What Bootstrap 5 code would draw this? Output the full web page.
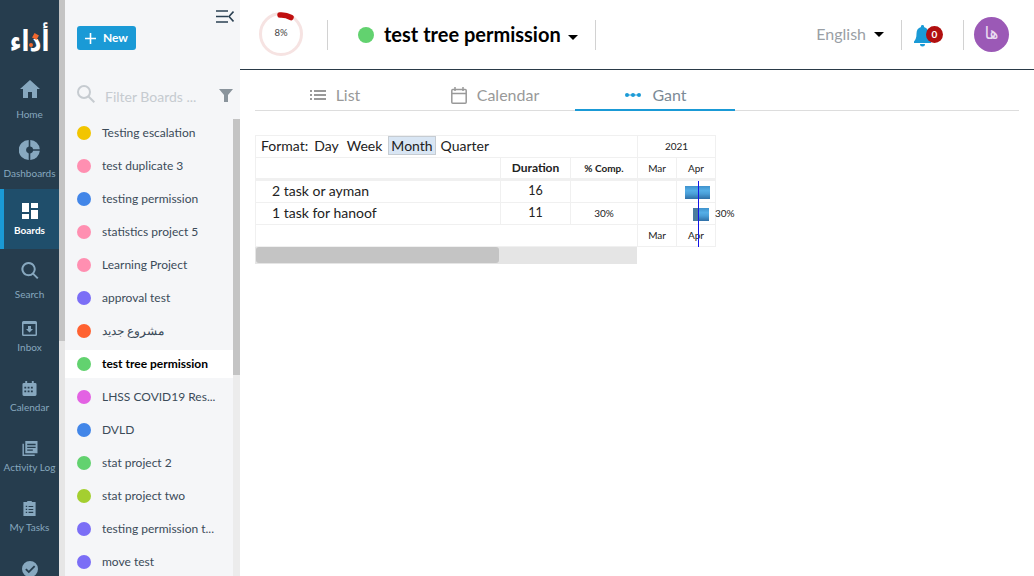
<!DOCTYPE html>
<html lang="en"><head><meta charset="utf-8"><title>Gantt</title>
<link href="https://cdn.jsdelivr.net/npm/bootstrap@5.3.0/dist/css/bootstrap.min.css" rel="stylesheet">
<style>
html,body{height:576px;overflow:hidden}
body{font-family:Lato,"Noto Sans",sans-serif;background:#fff;color:#253c4e}
.shell{height:576px;overflow:hidden}
.rail{width:59px;background:#263d4e;flex:none;height:576px;overflow:hidden}
.logo-box{height:69px;position:relative;color:#fff;flex:none}
.logo-text{position:absolute;left:0;width:59px;top:27px;text-align:center;font:700 29px/1 "DejaVu Sans",sans-serif;transform:scaleX(.8)}
.logo-spark{position:absolute;left:33px;top:34px;width:5px;height:5px;background:#f0682e;transform:rotate(30deg)}
.logo-spark2{position:absolute;left:29px;top:43px;width:4px;height:4px;border-radius:50%;background:#f0682e}
.rail-item{height:60px;color:#87a8bf;font-size:10px;line-height:13px;position:relative;white-space:nowrap;flex:none}
.rail-item svg{display:block;fill:#87a8bf;flex:none}
.rail-item.on{background:#1f4e6b;color:#fff;font-weight:700;border-left:4px solid #1a9ad6;padding-right:4px}
.rail-item.on svg{fill:#fff}
.ri-home{padding-top:11px;gap:10px}
.ri-dash{padding-top:11px;gap:7px}
.ri-board{padding-top:14px;gap:5px}
.ri-search{padding-top:13px;gap:9px}
.ri-std{padding-top:12px;gap:5px}
.strip{width:6px;flex:none;background:#e6e6e6}
.strip-thumb{height:341px;background:#c4c4c4}
.panel{width:175px;flex:none;background:#f5f6f8;height:576px;position:relative}
.collapse-ico{position:absolute;left:151px;top:10px}
.new-btn{position:absolute;left:12px;top:26px;width:59px;height:24px;background:#1a9ad6;color:#fff;font-size:12px;font-weight:700;border:0;border-radius:3px;padding:0;gap:7px}
.filter-row{height:119px;padding:85px 0 0 12px}
.filter-text{font-size:14px;color:#c6cbd0;margin-left:10px;line-height:24px;white-space:nowrap}
.filter-ico{margin:4px 7px 0 auto}
.board{height:28px;margin-bottom:5px;padding-left:12px;font-size:12px;gap:11px;color:#3b4b58;width:168px;white-space:nowrap}
.board.on{background:#fff;color:#000;font-weight:700}
.dot{width:14px;height:14px;border-radius:50%;flex:none}
.dot-lg{width:16px;height:16px;margin:0 10px 0 30px}
.panel-bar{position:absolute;left:168px;top:119px;width:7px;height:457px;background:#ececec}
.panel-thumb{height:256px;background:#c4c4c4}
.work{flex:1;min-width:0}
.topbar{height:70px;border-bottom:1px solid #2a3a48;position:relative;padding-left:19px}
.ring{width:44px;height:44px;position:relative;flex:none;margin-bottom:2px}
.ring svg{overflow:visible}
.ring span{position:absolute;inset:0;display:flex;align-items:center;justify-content:center;font-size:9.5px;color:#444}
.vsep{width:1px;height:30px;background:#d2d2d2;flex:none}
.vs1{margin-left:24px}.vs2{margin-left:17px}.vs3{margin-left:17px}.vs4{margin-left:15px}
.ptitle{font-size:20px;font-weight:700;color:#000;line-height:30px;white-space:nowrap;margin-bottom:2px}
.caret-d{width:0;height:0;border-left:5px solid transparent;border-right:5px solid transparent;border-top:5px solid #000;flex:none}
.caret-t{margin:6px 0 0 7px}
.caret-l{margin-left:8px}
.lang{font-size:16px;color:#9a9fa5;margin-bottom:2px}
.bell-wrap{width:34px;height:24px;position:relative;margin-left:12px}
.nbadge{position:absolute;left:12px;top:3px;width:17px;height:17px;border-radius:50%;background:#b10f0f;color:#fff;font-size:10px;font-weight:700;line-height:17px;text-align:center}
.avatar{width:35px;height:35px;border-radius:50%;background:#9b59b6;color:#e9dcf0;font:400 17px/33px "DejaVu Sans",sans-serif;text-align:center;margin:0 25px 0 10px}
.tabs-row{margin:11px 15px 0;height:30px;border-bottom:1px solid #ddd}
.tabbtn{width:160px;height:30px;color:#999;font-size:16px;gap:10px;line-height:20px;padding-bottom:2px}
.tabbtn.on{color:#7b8a96;border-bottom:2px solid #1a9ad6;padding:0 0 0 1px}
.gantt{margin:24px 0 0 15px;width:500px;position:relative;font-size:14px;color:#222}
.ggrid{display:grid;grid-template-columns:245px 70px 67px 39px 39px;width:461px;border-left:1px solid #f0f0f0}
.ggrid>div{height:22px;border-top:1px solid #f0f0f0;border-right:1px solid #f0f0f0;display:flex;align-items:center;justify-content:center;font-size:10px}
.ggrid>.thick{height:23px;border-bottom:2px solid #f0f0f0}
.ggrid>.nm{justify-content:flex-start;padding:0 0 2px 16px;font-size:14px}
.ggrid>.fmt{grid-column:1/4;justify-content:flex-start;padding:0 0 2px 5px;font-size:14px}
.ggrid>.yr{grid-column:4/6}
.ggrid>.blank{grid-column:1/4;height:23px;border-bottom:1px solid #f0f0f0}
.ggrid>.low{height:23px;border-bottom:1px solid #f0f0f0}
.fmt span{margin-right:4px;padding:0 2px;white-space:nowrap}
.fmt .lbl{margin-right:4px;padding:0}
.fmt .sel{background:#d9e6f4;border:1px solid #c6ccd2;margin:0 3px 0 0;padding:0 2px;line-height:17px}
.ggrid>.dur{font-size:12.5px}
.ggrid>.hd{font-weight:700;font-size:12px;color:#222}
.ggrid>.hd2{font-size:10px}
.gscroll{width:382px;height:17px;background:#e5e5e5;padding-left:1px}
.gthumb{width:243px;height:16px;background:#c4c4c4;border-radius:3px}
.today{position:absolute;left:443px;top:46px;width:1px;height:66px;background:#1414e6}
.gbar{position:absolute;height:13px;background:linear-gradient(#3f92cd,#55aee6 35%,#4a9fd8 60%,#2f6fa6)}
.gbar i{display:block;height:100%;width:5px;background:#4a7c9e}
.gb1{left:430px;top:51px;width:25px}
.gb2{left:438px;top:73px;width:16px}
.gpct{position:absolute;left:460px;top:71px;font-size:10px}
</style></head><body>
<div class="d-flex shell">
 <nav class="rail d-flex flex-column">
  <div class="logo-box"><span class="logo-text">أداء</span><i class="logo-spark"></i><i class="logo-spark2"></i></div>
  <div class="rail-item ri-home d-flex flex-column align-items-center"><svg width="20" height="18" viewBox="0 0 20 18"><path d="M10 0 0 9h3v9h5v-6h4v6h5V9h3z"/></svg>Home</div>
  <div class="rail-item ri-dash d-flex flex-column align-items-center"><svg width="21" height="20" viewBox="0 0 21 20"><path d="M9.700 0v6.600a3.500 3.500 0 0 0 0 6.800V20a10 10 0 0 1 0-20zM11.300 0A10 10 0 0 1 20.800 9.300h-6.600a3.500 3.500 0 0 0-2.900-2.700zM20.800 10.700A10 10 0 0 1 11.300 20v-6.600a3.500 3.500 0 0 0 2.900-2.700z"/></svg>Dashboards</div>
  <div class="rail-item ri-board on d-flex flex-column align-items-center"><svg width="16" height="16" viewBox="0 0 16 16"><path d="M0 0h7v9H0zM9 0h7v5H9zM9 7h7v9H9zM0 11h7v5H0z"/></svg>Boards</div>
  <div class="rail-item ri-search d-flex flex-column align-items-center"><svg width="18" height="17" viewBox="0 0 18 18"><path d="M7.500 0a7.500 7.500 0 0 1 5.900 12.100l4.600 4.500-1.500 1.400-4.500-4.600A7.500 7.500 0 1 1 7.500 0zm0 2a5.500 5.500 0 1 0 0 11 5.500 5.500 0 0 0 0-11z"/></svg>Search</div>
  <div class="rail-item ri-std d-flex flex-column align-items-center"><svg width="15" height="15" viewBox="0 0 15 15"><path fill-rule="evenodd" d="M1.500 0h12A1.500 1.500 0 0 1 15 1.500v12a1.500 1.500 0 0 1-1.500 1.500h-12A1.500 1.500 0 0 1 0 13.500v-12A1.500 1.500 0 0 1 1.500 0zM1.500 3v10.500h12V3zM6 5h3v3h2l-3.500 3.500L4 8h2z"/></svg>Inbox</div>
  <div class="rail-item ri-std d-flex flex-column align-items-center"><svg width="15" height="15" viewBox="0 0 15 16"><path fill-rule="evenodd" d="M3 0h2v2h5V0h2v2h1.500A1.500 1.500 0 0 1 15 3.500v11a1.500 1.500 0 0 1-1.500 1.500h-12A1.500 1.500 0 0 1 0 14.500v-11A1.500 1.500 0 0 1 1.500 2H3zM2 6v2h2V6zm3.500 0v2h2V6zM9 6v2h2V6zM2 10v2h2v-2zm3.500 0v2h2v-2zM9 10v2h2v-2z"/></svg>Calendar</div>
  <div class="rail-item ri-std d-flex flex-column align-items-center"><svg width="16" height="15" viewBox="0 0 16 16"><path fill-rule="evenodd" d="M3 0h13v13H3zM5 3v1.500h9V3zm0 3v1.500h9V6zm0 3v1.500h6V9zM0 3h1.500v11.500H13V16H0z"/></svg>Activity Log</div>
  <div class="rail-item ri-std d-flex flex-column align-items-center"><svg width="13" height="15" viewBox="0 0 13 16"><path fill-rule="evenodd" d="M4 1a2.500 2.500 0 0 1 5 0h4v15H0V1zM2.500 5v1.500H4V5zm3 .2v1.200h5V5.200zm-3 3V9.700H4V8.200zm3 .2v1.200h5V8.400zm-3 3v1.500H4v-1.500zm3 .2v1.200h5v-1.200z"/></svg>My Tasks</div>
  <div class="rail-item ri-std d-flex flex-column align-items-center"><svg width="16" height="16" viewBox="0 0 16 16"><path fill-rule="evenodd" d="M8 0a8 8 0 1 1 0 16A8 8 0 0 1 8 0zm4 4.500L6.800 9.700 4.500 7.500 3.200 8.800l3.600 3.500 6.500-6.500z"/></svg></div>
 </nav>
 <div class="strip"><div class="strip-thumb"></div></div>
 <aside class="panel">
  <svg class="collapse-ico" width="18" height="13" viewBox="0 0 18 13" fill="none" stroke="#2b4153" stroke-width="1.600"><path d="M0 1h12M0 6.500h12M0 12h12M17.500 1.500 13 6.500l4.500 5"/></svg>
  <button class="new-btn d-flex align-items-center justify-content-center"><svg width="11" height="11" viewBox="0 0 11 11"><path d="M4.700 0h1.600v4.700H11v1.600H6.300V11H4.700V6.300H0V4.700h4.700z" fill="#fff"/></svg>New</button>
  <div class="filter-row d-flex align-items-start">
   <svg width="18" height="18" viewBox="0 0 18 18" fill="none" stroke="#c6cbd0" stroke-width="2"><circle cx="7" cy="7" r="6"/><path d="m11.500 11.500 5.800 5.800"/></svg>
   <span class="filter-text">Filter Boards ...</span>
   <svg class="filter-ico" width="14" height="13" viewBox="0 0 14 13"><path d="M0 0h14L9 6v7H5V6z" fill="#8a949c"/></svg>
  </div>
  <div class="board d-flex align-items-center"><i class="dot" style="background:#f2c500"></i>Testing escalation</div>
  <div class="board d-flex align-items-center"><i class="dot" style="background:#ff8fb1"></i>test duplicate 3</div>
  <div class="board d-flex align-items-center"><i class="dot" style="background:#4286e8"></i>testing permission</div>
  <div class="board d-flex align-items-center"><i class="dot" style="background:#ff8fb1"></i>statistics project 5</div>
  <div class="board d-flex align-items-center"><i class="dot" style="background:#ff8fb1"></i>Learning Project</div>
  <div class="board d-flex align-items-center"><i class="dot" style="background:#7b6ef6"></i>approval test</div>
  <div class="board d-flex align-items-center"><i class="dot" style="background:#ff6231"></i>مشروع جديد</div>
  <div class="board on d-flex align-items-center"><i class="dot" style="background:#62d26f"></i>test tree permission</div>
  <div class="board d-flex align-items-center"><i class="dot" style="background:#e362e3"></i>LHSS COVID19 Res...</div>
  <div class="board d-flex align-items-center"><i class="dot" style="background:#4286e8"></i>DVLD</div>
  <div class="board d-flex align-items-center"><i class="dot" style="background:#62d26f"></i>stat project 2</div>
  <div class="board d-flex align-items-center"><i class="dot" style="background:#a4cf30"></i>stat project two</div>
  <div class="board d-flex align-items-center"><i class="dot" style="background:#7b6ef6"></i>testing permission t...</div>
  <div class="board d-flex align-items-center"><i class="dot" style="background:#7b6ef6"></i>move test</div>
  <div class="panel-bar"><div class="panel-thumb"></div></div>
 </aside>
 <main class="work">
  <header class="topbar d-flex align-items-center">
   <div class="ring"><svg width="44" height="44" viewBox="0 0 44 44" fill="none"><circle cx="22" cy="22" r="20.500" stroke="#f6e3e2" stroke-width="3"/><path d="M21 3A20 20 0 0 1 32 5.500" stroke="#c00f0f" stroke-width="5.500" stroke-linecap="round"/></svg><span>8%</span></div>
   <div class="vsep vs1"></div>
   <i class="dot dot-lg" style="background:#62d26f"></i>
   <span class="ptitle">test tree permission</span>
   <i class="caret-d caret-t"></i>
   <div class="vsep vs2"></div>
   <span class="lang ms-auto">English</span>
   <i class="caret-d caret-l"></i>
   <div class="vsep vs3"></div>
   <div class="bell-wrap"><svg width="17" height="22" viewBox="0 0 17 22"><path d="M8.500 0a1.500 1.500 0 0 1 1.500 2c3 .8 4.500 3.300 4.500 6.500 0 4 .8 6 2.500 8v1.500H0v-1.500c1.700-2 2.500-4 2.500-8C2.500 5.300 4 2.800 7 2a1.500 1.500 0 0 1 1.500-2zM6 19h5a2.500 2.500 0 0 1-5 0z" fill="#1a9ad6"/></svg><span class="nbadge">0</span></div>
   <div class="vsep vs4"></div>
   <div class="avatar">ها</div>
  </header>
  <div class="tabs-row d-flex">
   <div class="tabbtn d-flex align-items-center justify-content-center"><svg width="16" height="10" viewBox="0 0 16 10" fill="#999"><path d="M0 0h2v2H0zM4 0h12v2H4zM0 4h2v2H0zM4 4h12v2H4zM0 8h2v2H0zM4 8h12v2H4z"/></svg>List</div>
   <div class="tabbtn d-flex align-items-center justify-content-center"><svg width="16" height="17" viewBox="0 0 16 17" fill="none" stroke="#999" stroke-width="1.500"><rect x=".8" y="2.500" width="14.400" height="13.700" rx="1"/><path d="M4 0v4M12 0v4M1 6.500h14"/></svg>Calendar</div>
   <div class="tabbtn on d-flex align-items-center justify-content-center"><svg width="18" height="6" viewBox="0 0 18 6" fill="#1a9ad6"><circle cx="3" cy="3" r="2"/><circle cx="9" cy="3" r="2"/><circle cx="15" cy="3" r="2"/><path d="M3 2.500h12v1H3z"/></svg>Gant</div>
  </div>
  <section class="gantt">
   <div class="ggrid">
    <div class="fmt"><span class="lbl">Format:</span><span>Day</span><span>Week</span><span class="sel">Month</span><span>Quarter</span></div><div class="yr">2021</div>
    <div class="thick"></div><div class="thick hd">Duration</div><div class="thick hd hd2">% Comp.</div><div class="thick">Mar</div><div class="thick">Apr</div>
    <div class="nm">2 task or ayman</div><div class="dur">16</div><div></div><div></div><div></div>
    <div class="nm">1 task for hanoof</div><div class="dur">11</div><div>30%</div><div></div><div></div>
    <div class="blank"></div><div class="low">Mar</div><div class="low">Apr</div>
   </div>
   <div class="gscroll"><div class="gthumb"></div></div>
   <div class="gbar gb1"></div>
   <div class="gbar gb2"><i></i></div>
   <span class="gpct">30%</span>
   <div class="today"></div>
  </section>
 </main>
</div>
</body></html>
